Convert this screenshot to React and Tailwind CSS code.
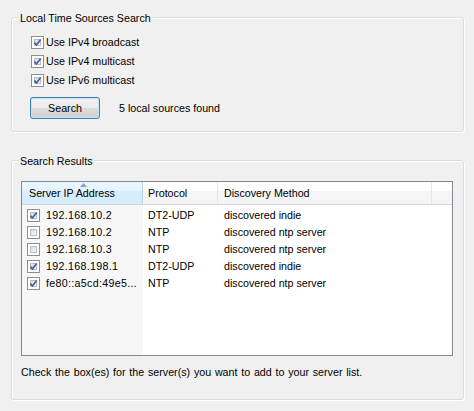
import React from "react";

const options = ["Use IPv4 broadcast", "Use IPv4 multicast", "Use IPv6 multicast"];

const rows = [
  { checked: true, ip: "192.168.10.2", protocol: "DT2-UDP", method: "discovered indie" },
  { checked: false, ip: "192.168.10.2", protocol: "NTP", method: "discovered ntp server" },
  { checked: false, ip: "192.168.10.3", protocol: "NTP", method: "discovered ntp server" },
  { checked: true, ip: "192.168.198.1", protocol: "DT2-UDP", method: "discovered indie" },
  { checked: true, ip: "fe80::a5cd:49e5...", protocol: "NTP", method: "discovered ntp server" },
];

function CheckBox({ checked }) {
  return (
    <span className="relative inline-block w-[13px] h-[13px] shrink-0 border border-[#8e8f8f] bg-white">
      <span className="absolute inset-[2px] border border-[#b9bdc2] bg-gradient-to-br from-[#d8dbde] to-[#f7f8f9]" />
      {checked && (
        <svg className="absolute inset-0" width="11" height="11" viewBox="0 0 11 11">
          <path d="M2.4 5.6 L4.4 7.9 L8.7 2.4" fill="none" stroke="#4560a6" strokeWidth="1.7" />
        </svg>
      )}
    </span>
  );
}

const GroupBox = ({ title, className, children }) => (
  <div
    className={`relative ml-[11px] w-[453px] rounded-[3px] border border-[#d5dfe5] shadow-[inset_1px_1px_0_#fff,1px_1px_0_#fff] ${className}`}
  >
    <span className="absolute -top-[7px] left-[6px] px-[2px] bg-[#f0f0f0] leading-[14px]">{title}</span>
    {children}
  </div>
);

export default function App() {
  return (
    <div className="w-[474px] h-[411px] bg-[#f0f0f0] overflow-hidden pt-[17px] text-black text-[10.7px] font-['Liberation_Sans',Arial,sans-serif]">
      {/* Local search */}
      <GroupBox title="Local Time Sources Search" className="h-[115px]">
        <div className="pl-[19px] pt-[18px] flex flex-col gap-[6px]">
          {options.map((o) => (
            <label key={o} className="flex items-center gap-[2px] h-[13px] leading-[13px]">
              <CheckBox checked />
              <span>{o}</span>
            </label>
          ))}
        </div>
        <div className="flex items-center pl-[18px] mt-[10px]">
          <button className="w-[70px] h-[22px] rounded-[3px] border border-[#3c7fb1] shadow-[inset_0_0_0_1px_#c5e6f9] bg-[linear-gradient(to_bottom,#f2f2f2_0%,#ebebeb_50%,#dddddd_50%,#cfcfcf_100%)] leading-[20px]">
            Search
          </button>
          <span className="ml-[19px]">5 local sources found</span>
        </div>
      </GroupBox>

      {/* Results */}
      <GroupBox title="Search Results" className="mt-[28px] h-[240px]">
        <div className="ml-[9px] mt-[20px] w-[432px] h-[175px] border border-[#828790] bg-white flex flex-col">
          <div className="flex h-[23px] border-b border-[#d5d5d5] bg-[linear-gradient(to_bottom,#ffffff_0%,#ffffff_40%,#f4f5f7_40%,#f4f5f7_100%)] leading-[22px]">
            <div className="relative w-[121px] pl-[7px] border-r border-[#b7d6ee] bg-[linear-gradient(to_bottom,#eaf6fd_0%,#e3f3fc_40%,#d9eefb_40%,#d4ebfa_100%)]">
              <svg className="absolute left-[58px] top-[1px]" width="7" height="4" viewBox="0 0 7 4">
                <path d="M0 4 L3.5 0 L7 4 Z" fill="#8ea3bb" />
              </svg>
              Server IP Address
            </div>
            <div className="w-[75px] pl-[5px] border-r border-[#e3e6ea]">Protocol</div>
            <div className="w-[214px] pl-[6px] border-r border-[#e3e6ea]">Discovery Method</div>
            <div className="flex-1" />
          </div>
          <div className="flex-1 pt-[2px] bg-[linear-gradient(to_right,#f7f7f7_121px,#ffffff_121px)]">
            {rows.map((r, i) => (
              <div key={i} className="flex items-center h-[17px]">
                <div className="w-[121px] flex items-center pl-[5px] gap-[6px]">
                  <CheckBox checked={r.checked} />
                  <span className="tracking-[0.3px] whitespace-nowrap">{r.ip}</span>
                </div>
                <div className="w-[75px] pl-[5px]">{r.protocol}</div>
                <div className="w-[214px] pl-[6px]">{r.method}</div>
              </div>
            ))}
          </div>
        </div>
        <p className="ml-[9px] mt-[9px] leading-[14px] [word-spacing:0.8px]">
          Check the box(es) for the server(s) you want to add to your server list.
        </p>
      </GroupBox>
    </div>
  );
}
